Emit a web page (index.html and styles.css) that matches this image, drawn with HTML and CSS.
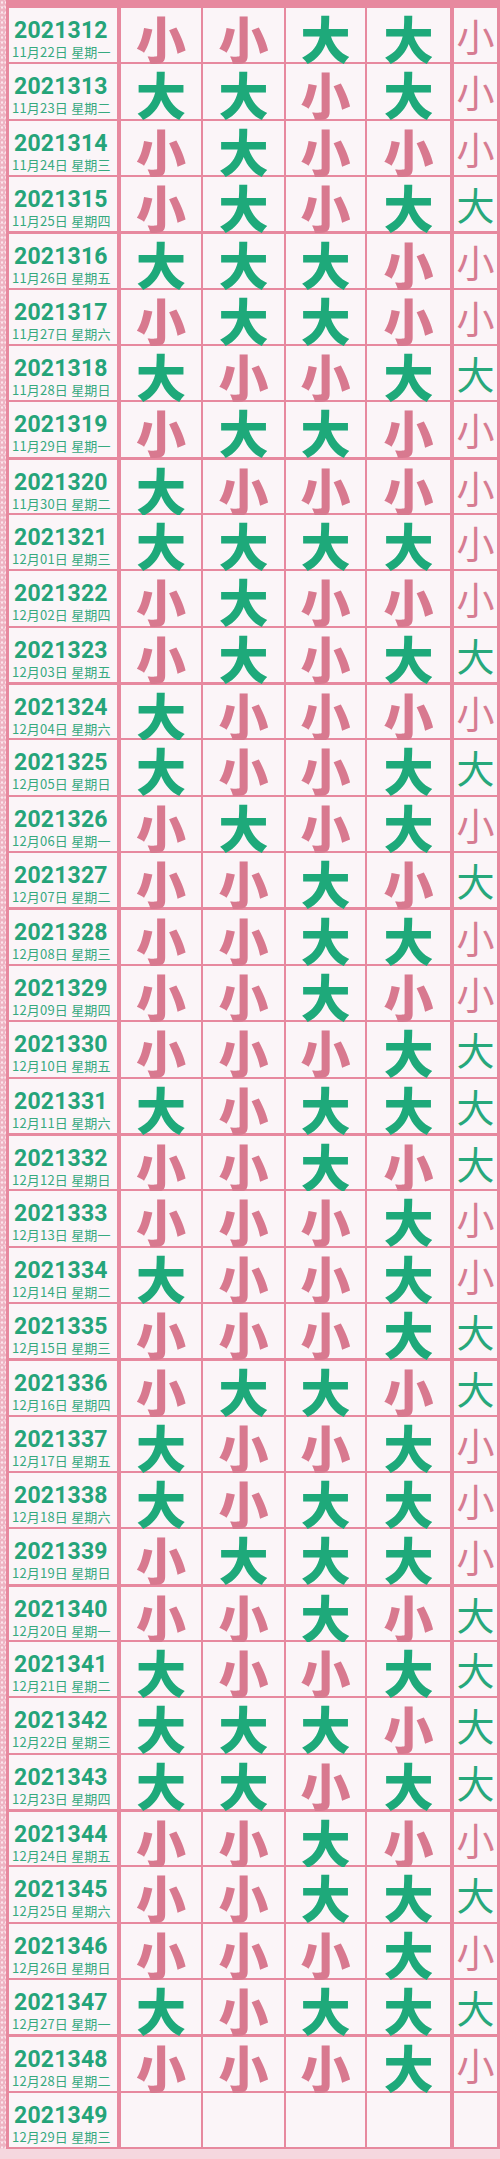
FILE: index.html
```html
<!DOCTYPE html>
<html lang="zh-CN">
<head>
<meta charset="utf-8">
<title>2021312-2021349</title>
<link rel="stylesheet" href="styles.css">
</head>
<body>
<div class="page">
  <div class="lace"></div>
  <div class="board">
    <div class="row"><div class="lab"><span class="num">2021312</span><span class="date">11月22日 星期一</span></div><div class="big x">小</div><div class="big x">小</div><div class="big d">大</div><div class="big d">大</div><div class="sm x">小</div></div>
    <div class="row"><div class="lab"><span class="num">2021313</span><span class="date">11月23日 星期二</span></div><div class="big d">大</div><div class="big d">大</div><div class="big x">小</div><div class="big d">大</div><div class="sm x">小</div></div>
    <div class="row"><div class="lab"><span class="num">2021314</span><span class="date">11月24日 星期三</span></div><div class="big x">小</div><div class="big d">大</div><div class="big x">小</div><div class="big x">小</div><div class="sm x">小</div></div>
    <div class="row"><div class="lab"><span class="num">2021315</span><span class="date">11月25日 星期四</span></div><div class="big x">小</div><div class="big d">大</div><div class="big x">小</div><div class="big d">大</div><div class="sm d">大</div></div>
    <div class="row grp"><div class="lab"><span class="num">2021316</span><span class="date">11月26日 星期五</span></div><div class="big d">大</div><div class="big d">大</div><div class="big d">大</div><div class="big x">小</div><div class="sm x">小</div></div>
    <div class="row"><div class="lab"><span class="num">2021317</span><span class="date">11月27日 星期六</span></div><div class="big x">小</div><div class="big d">大</div><div class="big d">大</div><div class="big x">小</div><div class="sm x">小</div></div>
    <div class="row"><div class="lab"><span class="num">2021318</span><span class="date">11月28日 星期日</span></div><div class="big d">大</div><div class="big x">小</div><div class="big x">小</div><div class="big d">大</div><div class="sm d">大</div></div>
    <div class="row"><div class="lab"><span class="num">2021319</span><span class="date">11月29日 星期一</span></div><div class="big x">小</div><div class="big d">大</div><div class="big d">大</div><div class="big x">小</div><div class="sm x">小</div></div>
    <div class="row grp"><div class="lab"><span class="num">2021320</span><span class="date">11月30日 星期二</span></div><div class="big d">大</div><div class="big x">小</div><div class="big x">小</div><div class="big x">小</div><div class="sm x">小</div></div>
    <div class="row"><div class="lab"><span class="num">2021321</span><span class="date">12月01日 星期三</span></div><div class="big d">大</div><div class="big d">大</div><div class="big d">大</div><div class="big d">大</div><div class="sm x">小</div></div>
    <div class="row"><div class="lab"><span class="num">2021322</span><span class="date">12月02日 星期四</span></div><div class="big x">小</div><div class="big d">大</div><div class="big x">小</div><div class="big x">小</div><div class="sm x">小</div></div>
    <div class="row"><div class="lab"><span class="num">2021323</span><span class="date">12月03日 星期五</span></div><div class="big x">小</div><div class="big d">大</div><div class="big x">小</div><div class="big d">大</div><div class="sm d">大</div></div>
    <div class="row grp"><div class="lab"><span class="num">2021324</span><span class="date">12月04日 星期六</span></div><div class="big d">大</div><div class="big x">小</div><div class="big x">小</div><div class="big x">小</div><div class="sm x">小</div></div>
    <div class="row"><div class="lab"><span class="num">2021325</span><span class="date">12月05日 星期日</span></div><div class="big d">大</div><div class="big x">小</div><div class="big x">小</div><div class="big d">大</div><div class="sm d">大</div></div>
    <div class="row"><div class="lab"><span class="num">2021326</span><span class="date">12月06日 星期一</span></div><div class="big x">小</div><div class="big d">大</div><div class="big x">小</div><div class="big d">大</div><div class="sm x">小</div></div>
    <div class="row"><div class="lab"><span class="num">2021327</span><span class="date">12月07日 星期二</span></div><div class="big x">小</div><div class="big x">小</div><div class="big d">大</div><div class="big x">小</div><div class="sm d">大</div></div>
    <div class="row grp"><div class="lab"><span class="num">2021328</span><span class="date">12月08日 星期三</span></div><div class="big x">小</div><div class="big x">小</div><div class="big d">大</div><div class="big d">大</div><div class="sm x">小</div></div>
    <div class="row"><div class="lab"><span class="num">2021329</span><span class="date">12月09日 星期四</span></div><div class="big x">小</div><div class="big x">小</div><div class="big d">大</div><div class="big x">小</div><div class="sm x">小</div></div>
    <div class="row"><div class="lab"><span class="num">2021330</span><span class="date">12月10日 星期五</span></div><div class="big x">小</div><div class="big x">小</div><div class="big x">小</div><div class="big d">大</div><div class="sm d">大</div></div>
    <div class="row"><div class="lab"><span class="num">2021331</span><span class="date">12月11日 星期六</span></div><div class="big d">大</div><div class="big x">小</div><div class="big d">大</div><div class="big d">大</div><div class="sm d">大</div></div>
    <div class="row grp"><div class="lab"><span class="num">2021332</span><span class="date">12月12日 星期日</span></div><div class="big x">小</div><div class="big x">小</div><div class="big d">大</div><div class="big x">小</div><div class="sm d">大</div></div>
    <div class="row"><div class="lab"><span class="num">2021333</span><span class="date">12月13日 星期一</span></div><div class="big x">小</div><div class="big x">小</div><div class="big x">小</div><div class="big d">大</div><div class="sm x">小</div></div>
    <div class="row"><div class="lab"><span class="num">2021334</span><span class="date">12月14日 星期二</span></div><div class="big d">大</div><div class="big x">小</div><div class="big x">小</div><div class="big d">大</div><div class="sm x">小</div></div>
    <div class="row"><div class="lab"><span class="num">2021335</span><span class="date">12月15日 星期三</span></div><div class="big x">小</div><div class="big x">小</div><div class="big x">小</div><div class="big d">大</div><div class="sm d">大</div></div>
    <div class="row grp"><div class="lab"><span class="num">2021336</span><span class="date">12月16日 星期四</span></div><div class="big x">小</div><div class="big d">大</div><div class="big d">大</div><div class="big x">小</div><div class="sm d">大</div></div>
    <div class="row"><div class="lab"><span class="num">2021337</span><span class="date">12月17日 星期五</span></div><div class="big d">大</div><div class="big x">小</div><div class="big x">小</div><div class="big d">大</div><div class="sm x">小</div></div>
    <div class="row"><div class="lab"><span class="num">2021338</span><span class="date">12月18日 星期六</span></div><div class="big d">大</div><div class="big x">小</div><div class="big d">大</div><div class="big d">大</div><div class="sm x">小</div></div>
    <div class="row"><div class="lab"><span class="num">2021339</span><span class="date">12月19日 星期日</span></div><div class="big x">小</div><div class="big d">大</div><div class="big d">大</div><div class="big d">大</div><div class="sm x">小</div></div>
    <div class="row grp"><div class="lab"><span class="num">2021340</span><span class="date">12月20日 星期一</span></div><div class="big x">小</div><div class="big x">小</div><div class="big d">大</div><div class="big x">小</div><div class="sm d">大</div></div>
    <div class="row"><div class="lab"><span class="num">2021341</span><span class="date">12月21日 星期二</span></div><div class="big d">大</div><div class="big x">小</div><div class="big x">小</div><div class="big d">大</div><div class="sm d">大</div></div>
    <div class="row"><div class="lab"><span class="num">2021342</span><span class="date">12月22日 星期三</span></div><div class="big d">大</div><div class="big d">大</div><div class="big d">大</div><div class="big x">小</div><div class="sm d">大</div></div>
    <div class="row"><div class="lab"><span class="num">2021343</span><span class="date">12月23日 星期四</span></div><div class="big d">大</div><div class="big d">大</div><div class="big x">小</div><div class="big d">大</div><div class="sm d">大</div></div>
    <div class="row grp"><div class="lab"><span class="num">2021344</span><span class="date">12月24日 星期五</span></div><div class="big x">小</div><div class="big x">小</div><div class="big d">大</div><div class="big x">小</div><div class="sm x">小</div></div>
    <div class="row"><div class="lab"><span class="num">2021345</span><span class="date">12月25日 星期六</span></div><div class="big x">小</div><div class="big x">小</div><div class="big d">大</div><div class="big d">大</div><div class="sm d">大</div></div>
    <div class="row"><div class="lab"><span class="num">2021346</span><span class="date">12月26日 星期日</span></div><div class="big x">小</div><div class="big x">小</div><div class="big x">小</div><div class="big d">大</div><div class="sm x">小</div></div>
    <div class="row"><div class="lab"><span class="num">2021347</span><span class="date">12月27日 星期一</span></div><div class="big d">大</div><div class="big x">小</div><div class="big d">大</div><div class="big d">大</div><div class="sm d">大</div></div>
    <div class="row grp"><div class="lab"><span class="num">2021348</span><span class="date">12月28日 星期二</span></div><div class="big x">小</div><div class="big x">小</div><div class="big x">小</div><div class="big d">大</div><div class="sm x">小</div></div>
    <div class="row"><div class="lab"><span class="num">2021349</span><span class="date">12月29日 星期三</span></div><div class="big"></div><div class="big"></div><div class="big"></div><div class="big"></div><div class="sm"></div></div>
  </div>
</div>
<div class="foot"></div>
</body>
</html>
```

FILE: styles.css
```css
html, body {
  margin: 0;
  padding: 0;
}

body {
  width: 500px;
  height: 2159px;
  overflow: hidden;
  background: #f5d7df;
  font-family: "Noto Sans CJK SC", "Noto Sans", sans-serif;
}

.page {
  display: flex;
  height: 2149px;
}

.lace {
  width: 6px;
  flex: none;
  background-color: #eeb4c3;
  background-image:
    radial-gradient(circle, #fbe8ee 0.9px, transparent 1.4px),
    radial-gradient(circle, #f7d3dc 0.8px, transparent 1.3px);
  background-size: 4px 5px, 5px 7px;
  background-position: 0 0, 2px 3px;
}

.board {
  flex: 1;
  box-sizing: border-box;
  height: 2149px;
  padding: 8px 3px 2px 3px;
  background: #e7899f;
  display: grid;
  grid-template-columns: 108px 82px 81px 79px 83px 45px;
  grid-template-rows: repeat(38, minmax(0, 1fr));
  column-gap: 2px;
  row-gap: 2px;
}

.row {
  display: contents;
}

.row > div {
  background: #fbf5f8;
  min-height: 0;
  min-width: 0;
  box-sizing: border-box;
}

.row > :nth-child(2),
.row > :nth-child(6) {
  margin-left: 2px;
}

.row.grp > div {
  margin-top: 1px;
}

.lab {
  display: flex;
  flex-direction: column;
  align-items: flex-start;
  padding: 11px 0 0 3px;
}

.num {
  font-family: Roboto, "Liberation Sans", sans-serif;
  font-weight: 700;
  font-size: 23px;
  line-height: 24px;
  letter-spacing: 0.2px;
  color: #25a479;
  padding-left: 2px;
}

.date {
  margin-top: 2px;
  font-family: "Noto Sans CJK SC", sans-serif;
  font-size: 13px;
  line-height: 14px;
  letter-spacing: 0.2px;
  color: #36a97f;
  white-space: nowrap;
}

/* compact primary-font metrics; the ideograph itself comes from Noto Sans CJK */
.big {
  text-align: center;
  font-family: "Liberation Serif", "Noto Sans CJK SC", sans-serif;
  font-weight: 900;
  font-size: 50px;
  line-height: 40px;
  padding-top: 14px;
}

.sm {
  text-align: center;
  font-family: "Noto Sans CJK SC", sans-serif;
  font-weight: 400;
  font-size: 38px;
  line-height: 40px;
  padding-top: 7px;
}

.big.d { color: #1ea97a; }
.big.x { color: #d8798f; }
.sm.d { color: #27a87b; }
.sm.x { color: #d67c92; }

.foot {
  height: 10px;
  background: #f5d7df;
}
```
